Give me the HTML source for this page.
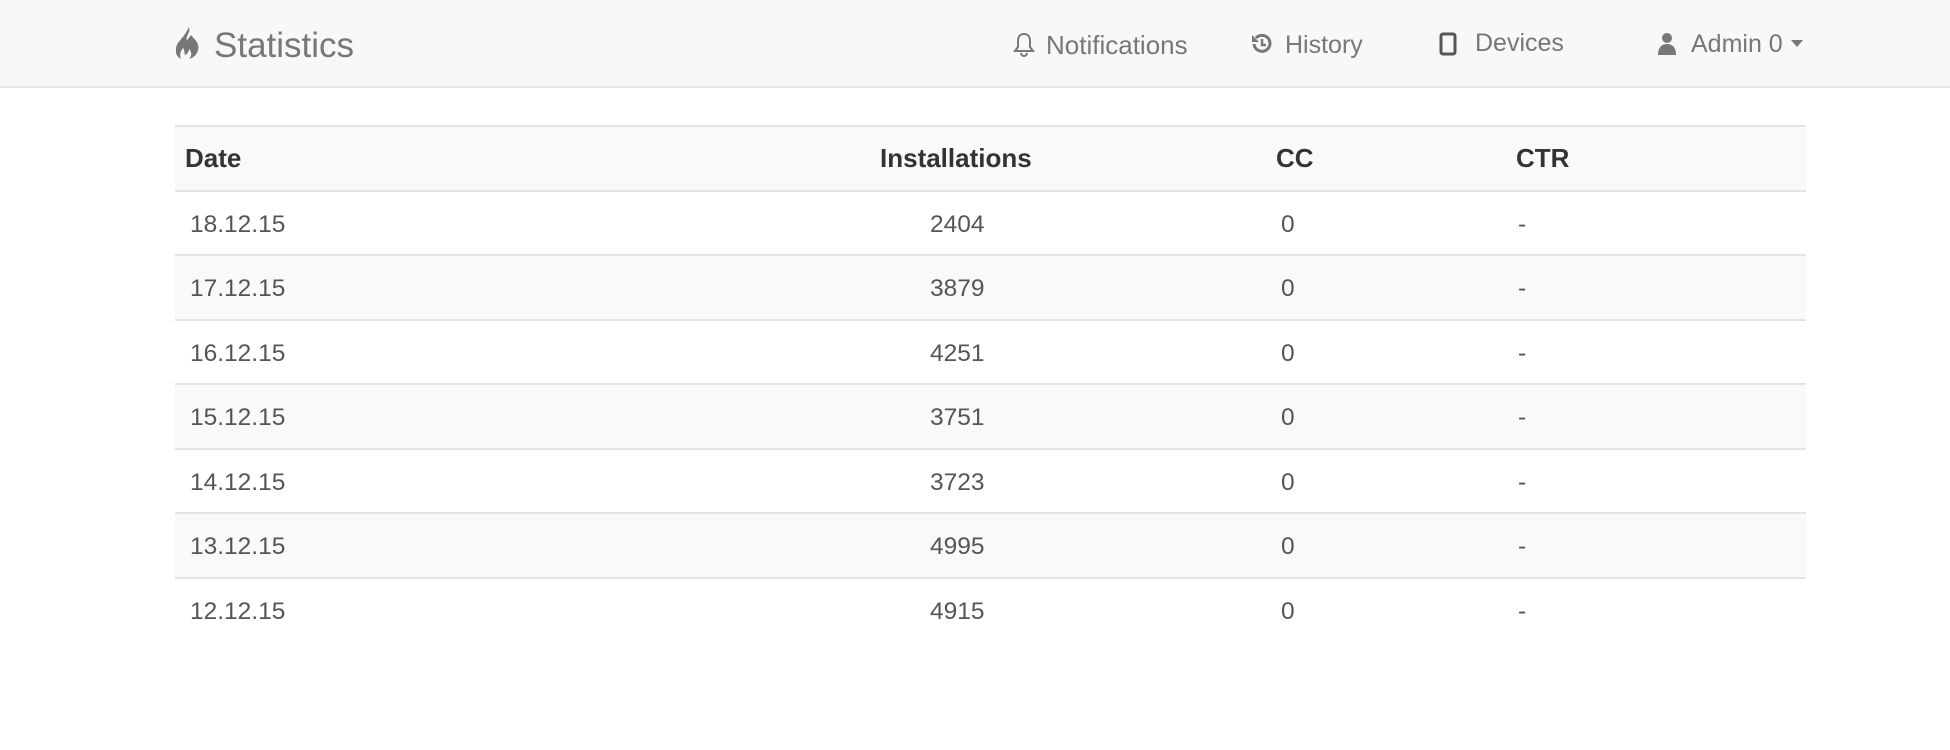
<!DOCTYPE html>
<html><head><meta charset="utf-8"><style>
*{margin:0;padding:0;box-sizing:border-box}
body{width:1950px;height:750px;background:#fff;font-family:"Liberation Sans",Arial,sans-serif;position:relative;overflow:hidden}
.nav{position:absolute;left:0;top:0;width:1950px;height:88px;background:#f8f8f8;border-bottom:2px solid #e7e7e7}
.t{position:absolute;color:#777;white-space:nowrap}
.brand{left:214px;top:26px;font-size:35px;color:#777}
.ni{font-size:25px;top:31px;color:#777}
table{position:absolute;left:175px;top:125px;width:1631px;border-collapse:collapse;table-layout:fixed;font-size:24.5px;color:#555}
th,td{height:64.5px;border-top:2px solid #e3e3e3;text-align:left;padding:0;font-weight:normal}
td{padding-top:4px}
th{font-weight:bold;color:#333;background:#f9f9f9;border-bottom:1px solid #e3e3e3;font-size:26px}
tr:nth-child(odd) td{background:#f9f9f9}
.c1{padding-left:15px;width:705px}
th.c1{padding-left:10px}
.c2{width:396px}
td.c2{padding-left:50px}
.c3{width:240px}
td.c3{padding-left:5px}
td.c4{padding-left:2px}
</style></head><body>
<div class="nav">
<svg style="position:absolute;left:176px;top:27px" width="26" height="32" viewBox="0 0 26 32"><path d="M13 0c2 6 -4 9 -2 14c1-3 3-4 4-6c3 4 9 8 7 15c-1 5-5 8-9 9c3-3 3-7 0-10c0 3-2 5-4 6c-1-2 0-5-2-7c-2 3-4 6-2 11c-4-2-6-6-5-11c1-6 6-9 9-14c2-3 3-5 4-7z" fill="#777"/></svg>
<div class="t brand">Statistics</div>
<svg style="position:absolute;left:1013px;top:32px" width="22" height="26" viewBox="0 0 22 26"><path d="M11 2c-4 0-6 3-6 7v6l-3 4h18l-3-4v-6c0-4-2-7-6-7z M8 21c0 2 1.5 3 3 3s3-1 3-3" fill="none" stroke="#777" stroke-width="2"/></svg>
<div class="t ni" style="left:1046px;font-size:26px;top:30px">Notifications</div>
<svg style="position:absolute;left:1251px;top:33px" width="22" height="22" viewBox="0 0 22 22"><path d="M5 5a8 8 0 1 1 -2 6" fill="none" stroke="#777" stroke-width="3"/><path d="M1 2v7h7z" fill="#777"/><path d="M11 6v6h4" fill="none" stroke="#777" stroke-width="2.5"/></svg>
<div class="t ni" style="left:1285px">History</div>
<svg style="position:absolute;left:1439px;top:32px" width="18" height="24" viewBox="0 0 18 24"><rect x="2" y="2" width="14" height="20" rx="2" fill="none" stroke="#555" stroke-width="3"/></svg>
<div class="t ni" style="left:1475px;top:29px">Devices</div>
<svg style="position:absolute;left:1657px;top:32px" width="20" height="24" viewBox="0 0 20 24"><circle cx="10" cy="6" r="5" fill="#777"/><path d="M1 23c0-8 4-11 9-11s9 3 9 11z" fill="#777"/></svg>
<div class="t ni" style="left:1691px;top:30px;font-size:25px">Admin 0</div>
<svg style="position:absolute;left:1791px;top:40px" width="12" height="8" viewBox="0 0 12 8"><path d="M0 0h12l-6 7z" fill="#777"/></svg>
</div>
<table>
<tr><th class="c1">Date</th><th class="c2">Installations</th><th class="c3">CC</th><th>CTR</th></tr>
<tr><td class="c1">18.12.15</td><td class="c2">2404</td><td class="c3">0</td><td class="c4">-</td></tr>
<tr><td class="c1">17.12.15</td><td class="c2">3879</td><td class="c3">0</td><td class="c4">-</td></tr>
<tr><td class="c1">16.12.15</td><td class="c2">4251</td><td class="c3">0</td><td class="c4">-</td></tr>
<tr><td class="c1">15.12.15</td><td class="c2">3751</td><td class="c3">0</td><td class="c4">-</td></tr>
<tr><td class="c1">14.12.15</td><td class="c2">3723</td><td class="c3">0</td><td class="c4">-</td></tr>
<tr><td class="c1">13.12.15</td><td class="c2">4995</td><td class="c3">0</td><td class="c4">-</td></tr>
<tr><td class="c1">12.12.15</td><td class="c2">4915</td><td class="c3">0</td><td class="c4">-</td></tr>
</table>
</body></html>
